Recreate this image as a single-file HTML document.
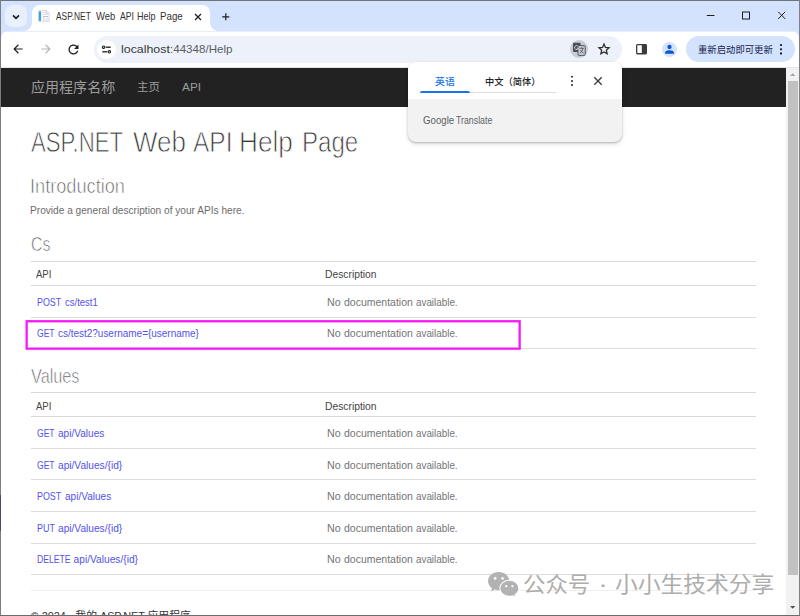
<!DOCTYPE html>
<html lang="zh-CN">
<head>
<meta charset="utf-8">
<title>ASP.NET Web API Help Page</title>
<style>
html,body{margin:0;padding:0;}
body{width:800px;height:616px;overflow:hidden;position:relative;background:#fff;font-family:"Liberation Sans","Noto Sans CJK SC",sans-serif;color:#333;}
.abs{position:absolute;}
#win{position:absolute;left:0;top:0;width:800px;height:616px;overflow:hidden;background:#fff;}
.t{position:absolute;white-space:nowrap;transform-origin:0 50%;z-index:30;display:block;}
.h1{-webkit-text-stroke:0.85px #fff;}
.h2{-webkit-text-stroke:0.68px #fff;}
/* chrome frame */
#tabstrip{position:absolute;left:0;top:0;width:800px;height:42px;background:#d3e3fd;}
#topline{position:absolute;left:0;top:0;width:800px;height:1px;background:#70737c;z-index:50;}
#leftline{position:absolute;left:0;top:0;width:1px;height:616px;background:#7d7d7f;z-index:50;}
#rightline{position:absolute;left:799px;top:0;width:1px;height:616px;background:#7c8088;z-index:50;}
#botline{position:absolute;left:0;top:614.5px;width:800px;height:2px;background:#6b6b6d;z-index:50;}
#tabsearch{position:absolute;left:5px;top:5px;width:22px;height:22px;border-radius:7px;background:#e9f0fd;}
#tab{position:absolute;left:32px;top:5px;width:178px;height:27px;background:#fff;border-radius:8px 8px 0 0;}
#tab:before,#tab:after{content:"";position:absolute;bottom:1px;width:8px;height:8px;}
#tab:before{left:-8px;background:radial-gradient(circle at 0 0,rgba(255,255,255,0) 7.5px,#fff 8px);}
#tab:after{right:-8px;background:radial-gradient(circle at 100% 0,rgba(255,255,255,0) 7.5px,#fff 8px);}
#toolbar{position:absolute;left:1px;top:31px;width:798px;height:36px;background:linear-gradient(#e6eefe 0,#e6eefe 1px,#fff 1px);border-radius:7px 7px 0 0;}
#tbline{position:absolute;left:0;top:67px;width:800px;height:1px;background:#e4e6ea;}
#omni{position:absolute;left:93.6px;top:36px;width:528px;height:26.5px;border-radius:13.25px;background:#edf2fa;}
#siteinfo{position:absolute;left:97px;top:40px;width:18.6px;height:18.6px;border-radius:50%;background:#fff;}
#trcircle{position:absolute;left:569.5px;top:40px;width:18px;height:18px;border-radius:9px;background:#c9ccd3;}
#profile{position:absolute;left:662px;top:41.5px;width:15.4px;height:15.4px;border-radius:50%;background:#d3e3fd;}
#chip{position:absolute;left:686px;top:36px;width:109px;height:26px;border-radius:13px;background:#d3e3fd;}
svg{position:absolute;overflow:visible;}
/* page */
#page{position:absolute;left:1px;top:68px;width:785px;height:546.5px;background:#fff;overflow:hidden;}
#navbar{position:absolute;left:0;top:0;width:785px;height:38.5px;background:#222;}
.hl{position:absolute;left:30px;width:725px;height:1px;background:#d8d8d8;}
.rl{position:absolute;left:30px;width:725px;height:1px;background:#dcdcdc;}
#magenta{position:absolute;left:24.5px;top:252.3px;width:490.8px;height:24.8px;border:2.25px solid #f41cf4;}
#hr{position:absolute;left:30px;top:522.4px;width:725px;height:1px;background:#eee;}
/* scrollbar */
#sb{position:absolute;left:786px;top:68px;width:13px;height:546.5px;background:#f1f1f1;}
#thumb{position:absolute;left:2px;top:13px;width:10px;height:494px;background:#c1c1c1;}
/* popup */
#pop{position:absolute;left:407.5px;top:62.3px;width:214px;height:79.4px;border-radius:8px;background:#f2f2f2;box-shadow:0 1px 2px rgba(0,0,0,.22),0 2px 5px rgba(0,0,0,.12);overflow:hidden;z-index:20;}
#poptop{position:absolute;left:0;top:0;width:214px;height:36.5px;background:#fff;}
</style>
</head>
<body>
<div id="win">
  <div id="tabstrip"></div>
  <div id="tabsearch"></div>
  <div id="tab"></div>
  <div id="toolbar"></div>
  <div id="tbline"></div>
  <div id="omni"></div>
  <div id="siteinfo"></div>
  <div id="trcircle"></div>
  <div id="profile"></div>
  <div id="chip"></div>
    <!-- tab search chevron -->
  <svg style="left:11px;top:11.500px" width="10" height="10" viewBox="0 0 10 10"><path d="M2 3.4 L5 6.3 L8 3.4" fill="none" stroke="#1f1f1f" stroke-width="1.7"/></svg>
  <!-- favicon -->
  <svg style="left:38px;top:10px" width="12" height="12" viewBox="0 0 12 12">
    <path d="M0.5 0.5 H8.3 L11.3 3.4 V11.6 H0.5 Z" fill="#fbfcfd" stroke="#d3d7dd" stroke-width="0.8"/>
    <path d="M8.3 0.5 V3.4 H11.3" fill="#eef0f3" stroke="#c5c9d0" stroke-width="0.6"/>
    <rect x="0.8" y="1.4" width="2.3" height="9.5" fill="#4a9edb"/>
    <rect x="4.4" y="2.4" width="3.6" height="0.7" fill="#c9ced6"/>
    <rect x="4.4" y="4.3" width="5.4" height="0.7" fill="#d3d7de"/>
    <rect x="5" y="6" width="5" height="0.9" fill="#b9bec7"/>
    <rect x="5" y="7" width="0.8" height="4" fill="#cfd3da"/>
    <rect x="9.6" y="7" width="0.7" height="4" fill="#cfd3da"/>
    <rect x="6.4" y="8.2" width="2.8" height="2.8" fill="#e8ecf4"/>
  </svg>
  <!-- tab close -->
  <svg style="left:194px;top:12.600px" width="8" height="8" viewBox="0 0 8 8"><path d="M1 1 L7 7 M7 1 L1 7" stroke="#1f1f1f" stroke-width="1.25" fill="none"/></svg>
  <!-- new tab plus -->
  <svg style="left:221.700px;top:12.600px" width="7.600" height="7.600" viewBox="0 0 9 9"><path d="M4.5 0.3 V8.7 M0.3 4.5 H8.7" stroke="#1f1f1f" stroke-width="1.450" fill="none"/></svg>
  <!-- window controls -->
  <svg style="left:706px;top:10px" width="90" height="12" viewBox="0 0 90 12">
    <path d="M0.8 5.5 H8.5" stroke="#1f1f1f" stroke-width="1" fill="none"/>
    <rect x="36.5" y="2" width="7" height="7" fill="none" stroke="#1f1f1f" stroke-width="1"/>
    <path d="M72.2 1.8 L79.2 8.9 M79.2 1.8 L72.2 8.9" stroke="#1f1f1f" stroke-width="1" fill="none"/>
  </svg>
  <!-- back -->
  <svg style="left:10.7px;top:42.2px" width="14" height="14" viewBox="0 0 24 24"><path d="M20 11H7.83l5.590-5.590L12 4l-8 8 8 8 1.410-1.410L7.830 13H20v-2z" fill="#1f1f1f"/></svg>
  <!-- forward -->
  <svg style="left:38.5px;top:42.2px" width="14" height="14" viewBox="0 0 24 24"><path d="M12 4l-1.410 1.410L16.170 11H4v2h12.170l-5.580 5.590L12 20l8-8z" fill="#b4b6ba"/></svg>
  <!-- reload -->
  <svg style="left:65.7px;top:41.7px" width="15" height="15" viewBox="0 0 24 24"><path d="M17.650 6.350C16.200 4.900 14.210 4 12 4c-4.420 0-7.990 3.580-7.990 8s3.570 8 7.990 8c3.730 0 6.840-2.550 7.730-6h-2.080c-.82 2.330-3.040 4-5.650 4-3.310 0-6-2.690-6-6s2.690-6 6-6c1.660 0 3.140.69 4.220 1.780L13 11h7V4l-2.350 2.350z" fill="#1f1f1f"/></svg>
  <!-- site info (tune) -->
  <svg style="left:100.800px;top:43.700px" width="11" height="11" viewBox="0 0 12 12">
    <circle cx="2.9" cy="3.5" r="1.3" fill="none" stroke="#1f1f1f" stroke-width="1.3"/>
    <path d="M5.3 3.5 H10.6" stroke="#1f1f1f" stroke-width="1.45"/>
    <circle cx="9.1" cy="8.5" r="1.3" fill="none" stroke="#1f1f1f" stroke-width="1.3"/>
    <path d="M1.4 8.500 H6.7" stroke="#1f1f1f" stroke-width="1.45"/>
  </svg>
  <!-- translate icon -->
  <svg style="left:572px;top:42px" width="14" height="14" viewBox="0 0 14 14">
    <rect x="1" y="0.8" width="7.6" height="9.2" rx="0.9" fill="#4a4d52"/>
    <rect x="6" y="3.6" width="7.2" height="9.8" rx="0.9" fill="#c9ccd3" stroke="#4a4d52" stroke-width="0.9"/>
    <path d="M7.6 6.3 H11.8 M9.700 5.400 V6.300 M11 6.400 C10.500 8.600 9.300 10.100 7.800 11 M8.400 7.800 C9.100 9.400 10.200 10.400 11.700 11.200" stroke="#4a4d52" stroke-width="0.8" fill="none"/>
    <path d="M5.900 4.100 A2 2 0 1 0 6.500 6.200 H4.700" stroke="#d6d8dd" stroke-width="0.9" fill="none"/>
  </svg>
  <!-- star -->
  <svg style="left:596.5px;top:42px" width="14" height="14" viewBox="0 0 24 24"><path d="M12 3.600 L14.450 9.400 L20.700 9.950 L15.950 14.050 L17.400 20.200 L12 16.950 L6.600 20.200 L8.050 14.050 L3.300 9.950 L9.550 9.400 Z" fill="none" stroke="#2a2a2a" stroke-width="2.100" stroke-linejoin="miter"/></svg>
  <!-- side panel -->
  <svg style="left:636.3px;top:44px" width="11" height="10.400" viewBox="0 0 11 10.4">
    <rect x="0.65" y="0.65" width="9.700" height="9.100" rx="0.8" fill="#fff" stroke="#3c3c3c" stroke-width="1.300"/>
    <rect x="5.800" y="0.65" width="4.550" height="9.100" fill="#3c3c3c"/>
  </svg>
  <!-- profile -->
  <svg style="left:662px;top:41.500px" width="15" height="15" viewBox="0 0 15 15">
    <circle cx="7.500" cy="5" r="2.150" fill="#0b57d0"/>
    <path d="M3 11.800 V10.700 C3 9 5.500 8.200 7.500 8.200 S12 9 12 10.700 V11.800 Z" fill="#0b57d0"/>
  </svg>
  <!-- chip dots -->
  <svg style="left:779.400px;top:43px" width="4" height="13" viewBox="0 0 4 13"><circle cx="2" cy="2.100" r="1.150" fill="#14234a"/><circle cx="2" cy="6.300" r="1.150" fill="#14234a"/><circle cx="2" cy="10.500" r="1.150" fill="#14234a"/></svg>


  <div id="page">
    <div id="navbar"></div>
    <div class="hl" style="top:193.1px"></div>
    <div class="hl" style="top:216.9px"></div>
    <div class="rl" style="top:249px"></div>
    <div class="rl" style="top:280.1px"></div>
    <svg style="left:0;top:0" width="785" height="546"><rect x="25.65" y="253.25" width="493" height="27.4" fill="none" stroke="#f51af5" stroke-width="2.3"/></svg>
    <div class="hl" style="top:324px"></div>
    <div class="hl" style="top:348.1px"></div>
    <div class="rl" style="top:379.8px"></div>
    <div class="rl" style="top:411.2px"></div>
    <div class="rl" style="top:442.8px"></div>
    <div class="rl" style="top:474.5px"></div>
    <div class="rl" style="top:505.7px"></div>
    <div id="hr"></div>
  </div>

  <div id="sb"><div id="thumb"></div></div>

  <div id="pop">
    <div id="poptop"></div>
    <div class="abs" style="left:13px;top:29.5px;width:135px;height:1px;background:#dadce0"></div>
    <div class="abs" style="left:12.7px;top:28.9px;width:49.5px;height:1.6px;background:#1a73e8;border-radius:2px 2px 0 0"></div>
  </div>


<div class="g"><span class="t " style="left:56.2px;top:11.01px;font-size:10.4px;line-height:12px;color:#333;transform:scaleX(0.8078);">ASP.NET</span> <span class="t " style="left:95.6px;top:11.01px;font-size:10.4px;line-height:12px;color:#333;transform:scaleX(0.9103);">Web</span> <span class="t " style="left:119.8px;top:11.01px;font-size:10.4px;line-height:12px;color:#333;transform:scaleX(0.8279);">API</span> <span class="t " style="left:137.4px;top:11.01px;font-size:10.4px;line-height:12px;color:#333;transform:scaleX(0.8655);">Help</span> <span class="t " style="left:159.9px;top:11.01px;font-size:10.4px;line-height:12px;color:#333;transform:scaleX(0.9346);">Page</span></div>
<div class="g"><span class="t " style="left:121.2px;top:43.01px;font-size:11.3px;line-height:13px;color:#383838;transform:scaleX(1.0957);">localhost</span><span class="t " style="left:169.6px;top:43.01px;font-size:11.3px;line-height:13px;color:#5a5d62;transform:scaleX(1.0251);">:44348/Help</span></div>
<span class="t " style="left:697.5px;top:45.01px;font-size:9.3px;line-height:11px;color:#14234a;transform:scaleX(1.0054);">重新启动即可更新</span>
<span class="t " style="left:30.6px;top:79.01px;font-size:13.9px;line-height:16px;color:#9d9d9d;transform:scaleX(1.0105);">应用程序名称</span>
<span class="t " style="left:136.8px;top:81.01px;font-size:10.8px;line-height:13px;color:#9d9d9d;transform:scaleX(1.0640);">主页</span>
<span class="t " style="left:181.5px;top:81px;font-size:10.6px;line-height:12px;color:#9d9d9d;transform:scaleX(1.1152);">API</span>
<div class="g"><span class="t h1" style="left:31.2px;top:125.02px;font-size:29.6px;line-height:34px;color:#3a3a3a;transform:scaleX(0.7504);">ASP.NET</span> <span class="t h1" style="left:132.5px;top:125.02px;font-size:29.6px;line-height:34px;color:#3a3a3a;transform:scaleX(0.8778);">Web</span> <span class="t h1" style="left:193.3px;top:125.02px;font-size:29.6px;line-height:34px;color:#3a3a3a;transform:scaleX(0.8282);">API</span> <span class="t h1" style="left:239.4px;top:125.02px;font-size:29.6px;line-height:34px;color:#3a3a3a;transform:scaleX(0.8838);">Help</span> <span class="t h1" style="left:301.6px;top:125.02px;font-size:29.6px;line-height:34px;color:#3a3a3a;transform:scaleX(0.8138);">Page</span></div>
<span class="t h2" style="left:30.4px;top:175.02px;font-size:19.7px;line-height:22px;color:#585858;transform:scaleX(0.9232);">Introduction</span>
<span class="t h2" style="left:30.6px;top:233.01px;font-size:19.7px;line-height:22px;color:#585858;transform:scaleX(0.8075);">Cs</span>
<span class="t h2" style="left:31.3px;top:365.01px;font-size:19.7px;line-height:22px;color:#585858;transform:scaleX(0.8253);">Values</span>
<span class="t " style="left:30.3px;top:205px;font-size:10.1px;line-height:12px;color:#6c6c6c;transform:scaleX(1.0035);">Provide a general description of your APIs here.</span>
<span class="t " style="left:35.5px;top:269px;font-size:10.2px;line-height:12px;color:#444;transform:scaleX(0.9351);">API</span>
<span class="t " style="left:325.0px;top:269px;font-size:10.2px;line-height:12px;color:#444;transform:scaleX(1.0122);">Description</span>
<span class="t " style="left:35.5px;top:401px;font-size:10.2px;line-height:12px;color:#444;transform:scaleX(0.9351);">API</span>
<span class="t " style="left:325.0px;top:401px;font-size:10.2px;line-height:12px;color:#444;transform:scaleX(1.0122);">Description</span>
<div class="g"><span class="t " style="left:36.8px;top:297px;font-size:10.2px;line-height:12px;color:#5252ee;transform:scaleX(0.8713);">POST</span> <span class="t " style="left:65.1px;top:297px;font-size:10.2px;line-height:12px;color:#5252ee;transform:scaleX(0.9336);">cs/test1</span></div>
<div class="g"><span class="t " style="left:327.1px;top:297px;font-size:10.2px;line-height:12px;color:#747474;transform:scaleX(1.0494);">No</span> <span class="t " style="left:344.0px;top:297px;font-size:10.2px;line-height:12px;color:#747474;transform:scaleX(1.0305);">documentation</span> <span class="t " style="left:415.6px;top:297px;font-size:10.2px;line-height:12px;color:#747474;transform:scaleX(0.9662);">available.</span></div>
<div class="g"><span class="t " style="left:37.1px;top:328px;font-size:10.2px;line-height:12px;color:#5252ee;transform:scaleX(0.8400);">GET</span> <span class="t " style="left:57.9px;top:328px;font-size:10.2px;line-height:12px;color:#5252ee;transform:scaleX(0.9774);">cs/test2?username={username}</span></div>
<div class="g"><span class="t " style="left:327.1px;top:328px;font-size:10.2px;line-height:12px;color:#747474;transform:scaleX(1.0494);">No</span> <span class="t " style="left:344.0px;top:328px;font-size:10.2px;line-height:12px;color:#747474;transform:scaleX(1.0305);">documentation</span> <span class="t " style="left:415.6px;top:328px;font-size:10.2px;line-height:12px;color:#747474;transform:scaleX(0.9662);">available.</span></div>
<div class="g"><span class="t " style="left:37.1px;top:428px;font-size:10.2px;line-height:12px;color:#5252ee;transform:scaleX(0.8400);">GET</span> <span class="t " style="left:57.9px;top:428px;font-size:10.2px;line-height:12px;color:#5252ee;transform:scaleX(0.9908);">api/Values</span></div>
<div class="g"><span class="t " style="left:327.1px;top:428px;font-size:10.2px;line-height:12px;color:#747474;transform:scaleX(1.0494);">No</span> <span class="t " style="left:344.0px;top:428px;font-size:10.2px;line-height:12px;color:#747474;transform:scaleX(1.0305);">documentation</span> <span class="t " style="left:415.6px;top:428px;font-size:10.2px;line-height:12px;color:#747474;transform:scaleX(0.9662);">available.</span></div>
<div class="g"><span class="t " style="left:37.1px;top:460px;font-size:10.2px;line-height:12px;color:#5252ee;transform:scaleX(0.8400);">GET</span> <span class="t " style="left:57.9px;top:460px;font-size:10.2px;line-height:12px;color:#5252ee;transform:scaleX(0.9968);">api/Values/{id}</span></div>
<div class="g"><span class="t " style="left:327.1px;top:460px;font-size:10.2px;line-height:12px;color:#747474;transform:scaleX(1.0494);">No</span> <span class="t " style="left:344.0px;top:460px;font-size:10.2px;line-height:12px;color:#747474;transform:scaleX(1.0305);">documentation</span> <span class="t " style="left:415.6px;top:460px;font-size:10.2px;line-height:12px;color:#747474;transform:scaleX(0.9662);">available.</span></div>
<div class="g"><span class="t " style="left:36.8px;top:491.01px;font-size:10.2px;line-height:12px;color:#5252ee;transform:scaleX(0.8713);">POST</span> <span class="t " style="left:65.1px;top:491.01px;font-size:10.2px;line-height:12px;color:#5252ee;transform:scaleX(0.9864);">api/Values</span></div>
<div class="g"><span class="t " style="left:327.1px;top:491.01px;font-size:10.2px;line-height:12px;color:#747474;transform:scaleX(1.0494);">No</span> <span class="t " style="left:344.0px;top:491.01px;font-size:10.2px;line-height:12px;color:#747474;transform:scaleX(1.0305);">documentation</span> <span class="t " style="left:415.6px;top:491.01px;font-size:10.2px;line-height:12px;color:#747474;transform:scaleX(0.9662);">available.</span></div>
<div class="g"><span class="t " style="left:36.8px;top:523px;font-size:10.2px;line-height:12px;color:#5252ee;transform:scaleX(0.8777);">PUT</span> <span class="t " style="left:57.9px;top:523px;font-size:10.2px;line-height:12px;color:#5252ee;transform:scaleX(0.9968);">api/Values/{id}</span></div>
<div class="g"><span class="t " style="left:327.1px;top:523px;font-size:10.2px;line-height:12px;color:#747474;transform:scaleX(1.0494);">No</span> <span class="t " style="left:344.0px;top:523px;font-size:10.2px;line-height:12px;color:#747474;transform:scaleX(1.0305);">documentation</span> <span class="t " style="left:415.6px;top:523px;font-size:10.2px;line-height:12px;color:#747474;transform:scaleX(0.9662);">available.</span></div>
<div class="g"><span class="t " style="left:36.8px;top:554.01px;font-size:10.2px;line-height:12px;color:#5252ee;transform:scaleX(0.8447);">DELETE</span> <span class="t " style="left:73.6px;top:554.01px;font-size:10.2px;line-height:12px;color:#5252ee;">api/Values/{id}</span></div>
<div class="g"><span class="t " style="left:327.1px;top:554.01px;font-size:10.2px;line-height:12px;color:#747474;transform:scaleX(1.0494);">No</span> <span class="t " style="left:344.0px;top:554.01px;font-size:10.2px;line-height:12px;color:#747474;transform:scaleX(1.0305);">documentation</span> <span class="t " style="left:415.6px;top:554.01px;font-size:10.2px;line-height:12px;color:#747474;transform:scaleX(0.9662);">available.</span></div>
<span class="t " style="left:30.8px;top:610.01px;font-size:10.8px;line-height:13px;color:#333;">© 2024 - 我的 ASP.NET 应用程序</span>
<div class="g"><span class="t wm" style="left:523.4px;top:572.01px;font-size:21.6px;line-height:25px;color:#adadad;transform:scaleX(1.0378);">公众号</span> <span class="t wm" style="left:598.0px;top:572.01px;font-size:21.6px;line-height:25px;color:#adadad;transform:scaleX(1.3968);">·</span> <span class="t wm" style="left:615.1px;top:572.01px;font-size:21.6px;line-height:25px;color:#adadad;transform:scaleX(1.0541);">小小生技术分享</span></div>
<span class="t " style="left:435.2px;top:76.02px;font-size:9.6px;line-height:11px;color:#1a73e8;transform:scaleX(1.0350);font-weight:500;">英语</span>
<span class="t " style="left:484.7px;top:76.02px;font-size:9.6px;line-height:11px;color:#202124;transform:scaleX(0.9652);font-weight:500;">中文（简体）</span>
<div class="g"><span class="t " style="left:423.0px;top:115.01px;font-size:10.3px;line-height:12px;color:#5a5e63;transform:scaleX(0.9385);">Google</span> <span class="t " style="left:456.0px;top:115.01px;font-size:10.3px;line-height:12px;color:#5f6368;transform:scaleX(0.8539);">Translate</span></div>
  <!-- popup dots + close -->
  <svg style="left:570px;top:75px;z-index:31" width="4" height="12" viewBox="0 0 4 12"><circle cx="2" cy="1.800" r="1.050" fill="#3a3a3a"/><circle cx="2" cy="6.100" r="1.050" fill="#3a3a3a"/><circle cx="2" cy="10.100" r="1.050" fill="#3a3a3a"/></svg>
  <svg style="left:593.800px;top:77px;z-index:31" width="8" height="8" viewBox="0 0 8 8"><path d="M0.300 0.300 L7.700 7.700 M7.700 0.300 L0.300 7.700" stroke="#3a3a3a" stroke-width="1.350" fill="none"/></svg>
  <!-- scrollbar arrows -->
  <svg style="left:790px;top:73.300px;z-index:31" width="5.400" height="3" viewBox="0 0 7 4"><path d="M0 4 L3.500 0.300 L7 4 Z" fill="#a3a3a3"/></svg>
  <svg style="left:790px;top:606.300px;z-index:31" width="5.400" height="3" viewBox="0 0 7 4"><path d="M0 0 L3.500 3.700 L7 0 Z" fill="#505050"/></svg>
  <!-- wechat -->
  <svg style="left:486px;top:570px;z-index:31" width="34.500" height="29.600" viewBox="0 0 34 28" preserveAspectRatio="none">
    <path d="M12.500 1.800 C6.700 1.800 2 5.700 2 10.500 C2 13.200 3.500 15.600 5.900 17.200 L4.900 20.300 L8.600 18.400 C9.800 18.900 11.100 19.200 12.500 19.200 C18.300 19.200 23 15.300 23 10.500 S18.300 1.800 12.500 1.800 Z" fill="#b2b2b2"/>
    <path d="M23 9.700 C17.800 9.700 13.600 13.100 13.600 17.300 S17.800 24.900 23 24.900 C24.100 24.900 25.200 24.700 26.200 24.400 L29.300 26 L28.500 23.400 C30.900 22 32.400 19.800 32.400 17.300 C32.400 13.100 28.200 9.700 23 9.700 Z" fill="#b2b2b2" stroke="#fff" stroke-width="1"/>
    <circle cx="9" cy="8" r="1.300" fill="#fff"/><circle cx="16.300" cy="8" r="1.300" fill="#fff"/>
    <circle cx="20" cy="15.300" r="1.100" fill="#fff"/><circle cx="26" cy="15.300" r="1.100" fill="#fff"/>
  </svg>


  <div class="abs" style="left:0;top:495px;width:1px;height:36px;background:#474c60;z-index:51"></div>
  <div id="topline"></div><div id="leftline"></div><div id="rightline"></div><div id="botline"></div>
</div>
</body>
</html>
